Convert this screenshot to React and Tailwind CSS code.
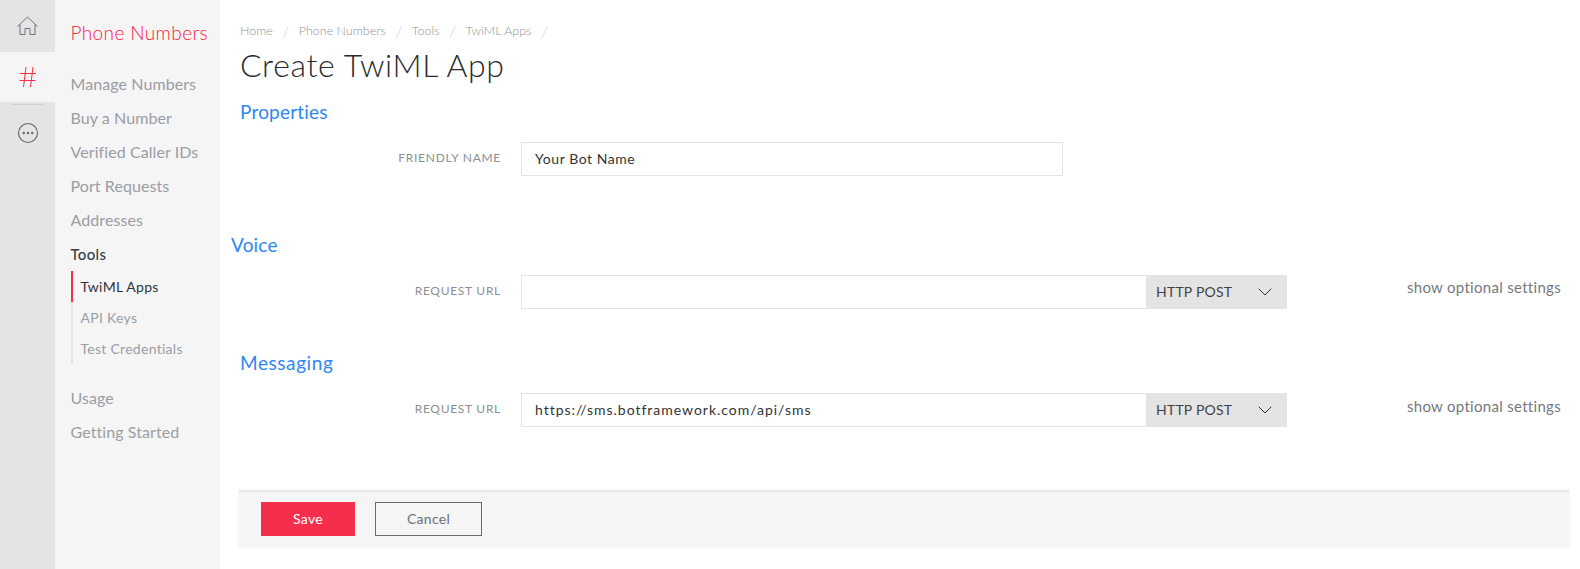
import React from 'react';
import { ChevronDown } from 'lucide-react';

const NAV_TOP = ['Manage Numbers', 'Buy a Number', 'Verified Caller IDs', 'Port Requests', 'Addresses'];

const HomeIcon = () => (
  <svg width="21" height="20" viewBox="0 0 21 20" fill="none" stroke="#6b7280" strokeWidth="1">
    <path d="M0.5 10.5 L10.5 1 L20.5 10.5" />
    <path d="M3 8.5 V18.5 H8 V12.5 H13 V18.5 H18 V8.5" />
  </svg>
);

const MoreIcon = () => (
  <svg width="22" height="22" viewBox="0 0 22 22" fill="none">
    <circle cx="11" cy="11" r="9.5" stroke="#5f6670" strokeWidth="1.1" />
    <circle cx="6.8" cy="11" r="1.2" fill="#5f6670" />
    <circle cx="11" cy="11" r="1.2" fill="#5f6670" />
    <circle cx="15.2" cy="11" r="1.2" fill="#5f6670" />
  </svg>
);

const HashIcon = () => (
  <svg width="18" height="22" viewBox="0 0 18 22" fill="none" stroke="#f22f46" strokeWidth="1">
    <path d="M7 1 L4.5 21" />
    <path d="M14 1 L11.5 21" />
    <path d="M1 7.5 H17" />
    <path d="M0.5 14.5 H16.5" />
  </svg>
);

const Row = ({ label, value, top, withMethod, textClass = 'tracking-[0.04em]', optionalClass = '-mt-[5px]' }) => (
  <div className={`flex ${top}`}>
    <div className="w-[301px] shrink-0 pr-[20px] pt-[7px] text-right text-[12px] leading-[18px] tracking-[0.06em] text-[#8b8f96]">
      {label}
    </div>
    {withMethod ? (
      <>
        <div className={`w-[625px] h-[34px] border border-[#e4e4e4] border-r-0 bg-white px-[13px] text-[14px] leading-[32px] text-[#333] ${textClass}`}>
          {value}
        </div>
        <div className="w-[141px] h-[34px] bg-[#e4e4e4] pb-[1px] pl-[10px] pr-[10px] flex items-center justify-between text-[14px] tracking-[0.015em] text-[#3f4349]">
          <span>HTTP POST</span>
          <ChevronDown size={24} strokeWidth={1} className="text-[#333]" />
        </div>
        <div className={`ml-auto pr-[19px] text-[15px] leading-[34px] tracking-[0.02em] text-[#75797f] ${optionalClass}`}>
          show optional settings
        </div>
      </>
    ) : (
      <div className={`w-[542px] h-[34px] border border-[#e4e4e4] bg-white px-[13px] text-[14px] leading-[32px] text-[#333] ${textClass}`}>
        {value}
      </div>
    )}
  </div>
);

const App = () => {
  return (
    <div className="flex h-[569px] w-[1580px] overflow-hidden bg-white font-['Lato','Open_Sans',sans-serif]">
      {/* Icon rail */}
      <div className="w-[55px] shrink-0 bg-[#e4e4e4]">
        <div className="flex h-[52px] items-center justify-center pb-[1px]">
          <HomeIcon />
        </div>
        <div className="flex h-[50px] items-center justify-center bg-[#f5f5f5]">
          <HashIcon />
        </div>
        <div className="mx-[12px] mt-[2px] h-px bg-[#cfcfcf]" />
        <div className="flex justify-center pt-[17px]">
          <MoreIcon />
        </div>
      </div>

      {/* Sub nav */}
      <div className="w-[165px] shrink-0 bg-[#f5f5f5] pl-[15.5px]">
        <div className="mt-[20px] text-[19px] font-light leading-[26px] tracking-[0.02em] text-[#f5203c]">Phone Numbers</div>
        <div className="mt-[21px]">
          {NAV_TOP.map((item) => (
            <div key={item} className="h-[34px] text-[16px] leading-[34px] tracking-[0.005em] text-[#9a9da4]">
              {item}
            </div>
          ))}
          <div className="h-[34px] text-[15px] font-medium leading-[34px] tracking-[0.02em] text-[#3a3f46]">Tools</div>
        </div>
        <div className="border-l-2 border-[#e4e4e4] text-[14px] leading-[31px] tracking-[0.02em] text-[#9a9da4]">
          <div className="-ml-[2px] border-l-2 border-[#f22f46] pl-[8px] text-[#30343a]">TwiML Apps</div>
          <div className="pl-[8px]">API Keys</div>
          <div className="pl-[8px]">Test Credentials</div>
        </div>
        <div className="mt-[17px]">
          <div className="h-[34px] text-[16px] leading-[34px] tracking-[0.005em] text-[#9a9da4]">Usage</div>
          <div className="h-[34px] text-[16px] leading-[34px] tracking-[0.005em] text-[#9a9da4]">Getting Started</div>
        </div>
      </div>

      {/* Main */}
      <div className="flex-1 min-w-0">
        <div className="ml-[20px] mt-[22px] flex items-center text-[12.5px] leading-[17px] text-[#8f9298] font-light">
          <span>Home</span>
          <span className="mx-[9.5px] text-[16px] text-[#d6d6d6]">/</span>
          <span>Phone Numbers</span>
          <span className="mx-[9.5px] text-[16px] text-[#d6d6d6]">/</span>
          <span>Tools</span>
          <span className="mx-[9.5px] text-[16px] text-[#d6d6d6]">/</span>
          <span>TwiML Apps</span>
          <span className="mx-[9.5px] text-[16px] text-[#d6d6d6]">/</span>
        </div>
        <h1 className="ml-[20px] mt-[2px] text-[32px] font-light leading-[48px] tracking-[0.02em] text-[#282a2e]">
          Create TwiML App
        </h1>
        <h2 className="ml-[20px] mt-[9px] text-[19px] leading-[28px] tracking-[0.01em] text-[#2f86f5]">Properties</h2>
        <Row label="FRIENDLY NAME" value="Your Bot Name" top="mt-[16px]" />
        <h2 className="ml-[11px] mt-[55px] text-[19px] leading-[28px] tracking-[0.01em] text-[#2f86f5]">Voice</h2>
        <Row label="REQUEST URL" value="" top="mt-[16px]" withMethod />
        <h2 className="ml-[20px] mt-[40px] text-[19px] leading-[28px] tracking-[0.03em] text-[#2f86f5]">Messaging</h2>
        <Row
          label="REQUEST URL"
          value="https://sms.botframework.com/api/sms"
          top="mt-[16px]"
          withMethod
          textClass="tracking-[0.07em]"
          optionalClass="-mt-[4px]"
        />

        {/* Footer */}
        <div className="ml-[19px] mr-[11px] mt-[63px] flex h-[57px] items-center gap-[20px] border-t-2 border-[#e9e9e9] bg-[#f5f5f5] pb-[2px] pl-[22px] shadow-[0_0_3px_rgba(0,0,0,0.08)]">
          <button className="h-[34px] w-[94px] bg-[#f52f4b] text-[14px] tracking-[0.02em] text-white">Save</button>
          <button className="h-[34px] w-[107px] border border-[#6b6b6b] text-[14px] tracking-[0.02em] text-[#6b7078]">Cancel</button>
        </div>
      </div>
    </div>
  );
};

export default App;
